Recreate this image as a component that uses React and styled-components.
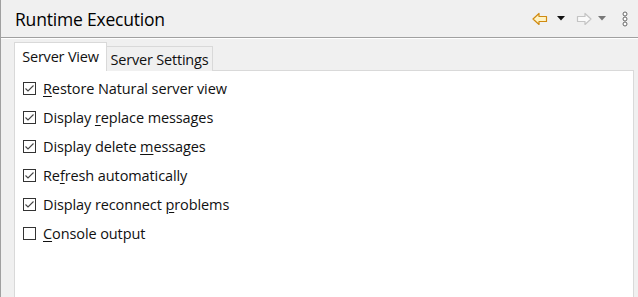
import React from 'react';
import styled, { createGlobalStyle } from 'styled-components';

const GlobalStyle = createGlobalStyle`
    html, body {
        margin: 0;
        padding: 0;
        background: #f0f0f0;
    }
    body {
        font-family: "Open Sans", "Noto Sans", sans-serif;
        color: #000;
    }
`;

const View = styled.div`
    display: flex;
    flex-direction: column;
    width: 638px;
    height: 297px;
    box-sizing: border-box;
    border-left: 1px solid #a0a0a0;
    background: #f0f0f0;
    overflow: hidden;
`;

const Header = styled.div`
    display: flex;
    align-items: center;
    justify-content: space-between;
    height: 38px;
    box-sizing: border-box;
    padding: 0 10px 0 14px;
    border-bottom: 1px solid #a0a0a0;
    box-shadow: 0 1px 0 #fff;
`;

const Title = styled.span`
    font-size: 17.5px;
    letter-spacing: -0.2px;
    padding-top: 1px;
`;

const Tools = styled.div`
    display: flex;
    align-items: center;
`;

const Tool = styled.span`
    display: flex;
    margin-left: ${p => p.gap || 0}px;
`;

const Body = styled.div`
    flex: 1;
    display: flex;
    flex-direction: column;
    padding: 5px 4px 0 13px;
`;

const TabRow = styled.div`
    display: flex;
    align-items: flex-end;
    height: 28px;
    position: relative;
    z-index: 1;
    margin-bottom: -1px;
`;

const Tab = styled.div`
    box-sizing: border-box;
    display: flex;
    align-items: center;
    justify-content: center;
    font-size: 14.5px;
    letter-spacing: -0.2px;
    border: 1px solid #d9d9d9;
    border-bottom: none;
    background: ${p => (p.active ? '#fff' : '#f0f0f0')};
    height: ${p => (p.active ? '29px' : '25px')};
    width: ${p => p.width}px;
    margin-left: ${p => (p.active ? '0' : '-1px')};
    padding-bottom: ${p => (p.active ? '2px' : '0')};
    color: #111;
`;

const Panel = styled.div`
    flex: 1;
    background: #fff;
    border: 1px solid #d9d9d9;
    border-bottom: none;
    padding: 3px 0 0 8px;
`;

const Row = styled.label`
    display: flex;
    align-items: center;
    height: 29px;
    font-size: 14.5px;
    letter-spacing: -0.1px;
    gap: 7px;
    color: #111;
`;

const Box = styled.span`
    display: flex;
    align-items: center;
    justify-content: center;
    width: 13px;
    height: 13px;
    box-sizing: border-box;
    border: 1px solid #333;
    background: #fff;
`;

const Key = styled.span`
    text-decoration: underline;
    text-underline-offset: 2px;
`;

const Check = ({ checked }) => (
    <Box>
        {checked && (
            <svg width="11" height="11" viewBox="0 0 11 11">
                <path d="M1.5 5.5 L4 8 L9.5 2.5" fill="none" stroke="#444" strokeWidth="1.1" />
            </svg>
        )}
    </Box>
);

const BackArrow = () => (
    <svg width="16" height="14" viewBox="0 0 16 14">
        <path d="M1 7 L7 1.5 V4.5 H14.5 V9.5 H7 V12.5 Z" fill="#fff3c4" stroke="#d08a10" strokeWidth="1.2" strokeLinejoin="round" />
    </svg>
);

const ForwardArrow = () => (
    <svg width="16" height="14" viewBox="0 0 16 14">
        <path d="M15 7 L9 1.5 V4.5 H1.5 V9.5 H9 V12.5 Z" fill="#fafafa" stroke="#c4c4c4" strokeWidth="1.2" strokeLinejoin="round" />
    </svg>
);

const Triangle = ({ color }) => (
    <svg width="8" height="5" viewBox="0 0 8 5">
        <path d="M0 0 H8 L4 4.5 Z" fill={color} />
    </svg>
);

const MenuDots = () => (
    <svg width="6" height="16" viewBox="0 0 6 16">
        <circle cx="3" cy="3" r="2" fill="#fff" stroke="#666" strokeWidth="1" />
        <circle cx="3" cy="8" r="2" fill="#fff" stroke="#666" strokeWidth="1" />
        <circle cx="3" cy="13" r="2" fill="#fff" stroke="#666" strokeWidth="1" />
    </svg>
);

const options = [
    { checked: true, parts: ['', 'R', 'estore Natural server view'] },
    { checked: true, parts: ['Display ', 'r', 'eplace messages'] },
    { checked: true, parts: ['Display delete ', 'm', 'essages'] },
    { checked: true, parts: ['Re', 'f', 'resh automatically'] },
    { checked: true, parts: ['Display reconnect ', 'p', 'roblems'] },
    { checked: false, parts: ['', 'C', 'onsole output'] },
];

export default function App() {
    return (
        <>
            <GlobalStyle />
            <View>
                <Header>
                    <Title>Runtime Execution</Title>
                    <Tools>
                        <Tool><BackArrow /></Tool>
                        <Tool gap={9}><Triangle color="#111" /></Tool>
                        <Tool gap={11}><ForwardArrow /></Tool>
                        <Tool gap={6}><Triangle color="#777" /></Tool>
                        <Tool gap={16}><MenuDots /></Tool>
                    </Tools>
                </Header>
                <Body>
                    <TabRow>
                        <Tab active width={93}>Server View</Tab>
                        <Tab width={107}>Server Settings</Tab>
                    </TabRow>
                    <Panel>
                        {options.map((o, i) => (
                            <Row key={i}>
                                <Check checked={o.checked} />
                                <span>
                                    {o.parts[0]}
                                    <Key>{o.parts[1]}</Key>
                                    {o.parts[2]}
                                </span>
                            </Row>
                        ))}
                    </Panel>
                </Body>
            </View>
        </>
    );
}
